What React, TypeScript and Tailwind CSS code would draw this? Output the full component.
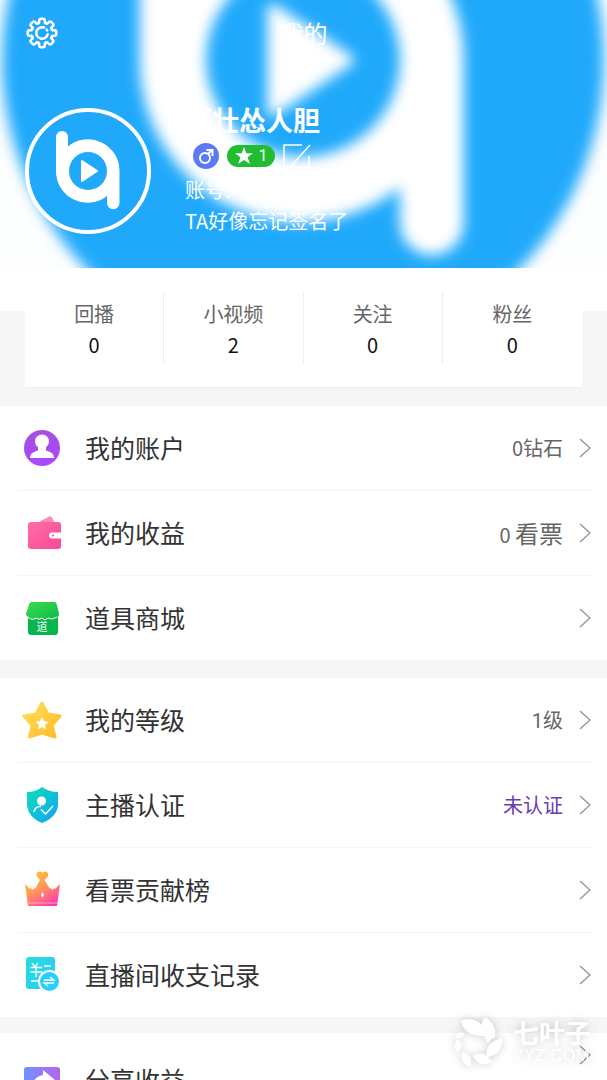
import type { ReactNode } from "react";

function LogoMark() {
  return (
    <g>
      <path
        fillRule="evenodd"
        fill="white"
        d="M-32 -34a6 6 0 0 1 12 0v9.500A31.500 31.500 0 0 1 31.500 0V32a6 6 0 0 1-12.500 0V25A31.500 31.500 0 0 1-32 0ZM0-19a19 19 0 1 0 0 38a19 19 0 1 0 0-38Z"
      />
      <path fill="white" stroke="white" strokeWidth="2" strokeLinejoin="round" d="M-6-10V10L9 0Z" />
    </g>
  );
}

const gearTurns = [0, 45, 90, 135, 180, 225, 270, 315];

function GearIcon() {
  return (
    <svg viewBox="-16 -16 32 32" className="size-8" fill="none" stroke="white" strokeWidth="2.500" strokeLinejoin="round" strokeLinecap="round">
      {gearTurns.map((turn) => (
        <path
          key={turn}
          transform={`rotate(${turn})`}
          d="M-5.200-9.300Q-3-9.600-2.800-11.500V-12.500Q-2.800-14.300-1-14.300H1Q2.800-14.300 2.800-12.500V-11.500Q3-9.600 5.200-9.300Q4.200-9.600 3.200-10.200"
        />
      ))}
      <path d="M2-5.500A5.800 5.800 0 1 0 5.700 1.200" />
      <path d="M4.700-3.400L5.200-2.500" />
    </svg>
  );
}

const icons: Record<string, ReactNode> = {
  account: (
    <>
      <linearGradient id="account" x2="0" y2="1"><stop stopColor="#a64fe0" /><stop offset="1" stopColor="#aa48ff" /></linearGradient>
      <circle cx="20" cy="20" r="18" fill="url(#account)" />
      <circle cx="20" cy="13.500" r="7" fill="white" />
      <path d="M8 30C8 25 12 24 16 22.500V18H24V22.500C28 24 32 25 32 30Z" fill="white" />
    </>
  ),
  income: (
    <>
      <linearGradient id="income" x2="1" y2="1"><stop stopColor="#ff6fa4" /><stop offset="1" stopColor="#f9479c" /></linearGradient>
      <path d="M15 10L27 3.500Q29 2.500 30 4.500L33 10Z" fill="#fb8cb4" />
      <rect x="6" y="9" width="33" height="27" rx="3" fill="url(#income)" />
      <path d="M39 19.500H30a3 3 0 0 0 0 6H39Z" fill="white" />
      <circle cx="31" cy="22.500" r="1" fill="#f9479c" />
    </>
  ),
  shop: (
    <>
      <linearGradient id="shop" x2="1" y2="1"><stop stopColor="#39dd4b" /><stop offset="1" stopColor="#0fb94d" /></linearGradient>
      <path d="M6 19H36V34a3 3 0 0 1-3 3H9a3 3 0 0 1-3-3Z" fill="#08b64e" />
      <path d="M9.500 4H32.500Q34 4 34.500 5.500L37 15.500Q37 20 32 20.500Q29 22 26 20Q23 23 20 20Q17 22 14 20Q11 22 8 19.500Q4 18.500 4 15.500L7.500 5.500Q8 4 9.500 4Z" fill="url(#shop)" />
      <path d="M6 19Q10 23 14 20Q17 22.500 20 20Q23 23.500 26 20Q30 22.500 35 19" fill="none" stroke="white" strokeWidth="1" />
      <text x="20" y="33" textAnchor="middle" fontSize="11" fill="white">道</text>
    </>
  ),
  level: (
    <>
      <linearGradient id="level" x2="1" y2="1"><stop stopColor="#ffe05a" /><stop offset="1" stopColor="#ffba27" /></linearGradient>
      <path d="M20 3L26 14L38 16L30 25.500L33 37L20 33L7.500 37L10 25.500L2 16L14 14Z" fill="url(#level)" stroke="url(#level)" strokeWidth="3" strokeLinejoin="round" />
      <path d="M20 17L22 21L26.500 22L23 25L24 29.500L20 27L16 29.500L17 25L13.500 22L18 21Z" fill="white" />
    </>
  ),
  verify: (
    <>
      <linearGradient id="verify" x2="1" y2="1"><stop stopColor="#0fe0b4" /><stop offset="1" stopColor="#12a2f5" /></linearGradient>
      <path d="M20 2Q27 7 36 7V20Q35 32 20 38Q6 32 5 20V7Q14 7 20 2Z" fill="url(#verify)" />
      <circle cx="19.500" cy="16" r="4.500" fill="white" />
      <path d="M12 27Q13 21 19 21.500M19 24.500L23.500 29L31 21" fill="none" stroke="white" strokeWidth="1.500" />
    </>
  ),
  ranking: (
    <>
      <linearGradient id="ranking" x1="0.200" x2="0.800" y2="1"><stop stopColor="#ffc42b" /><stop offset=".45" stopColor="#ff9a58" /><stop offset="1" stopColor="#ff35b2" /></linearGradient>
      <path d="M3 14L8 19Q10 12 13 19L18 10L15 6.500Q13 2 18 1.500Q20 1.500 20.500 3Q21 1.500 23.500 1.500Q28 3 25.500 7L22.500 10L28 19Q30 12 33 19L38 14L35 36H6Z" fill="url(#ranking)" />
      <path d="M6 33H35.500" stroke="white" strokeWidth="0.700" opacity="0.600" />
      <path d="M20.500 22L22 25L20.500 28L19 25ZM10.500 15L12.500 17.500L10.500 20L8.500 17.500ZM30.500 15L32.500 17.500L30.500 20L28.500 17.500Z" fill="white" />
    </>
  ),
  record: (
    <>
      <linearGradient id="record" x2="1" y2="1"><stop stopColor="#24dcdc" /><stop offset="1" stopColor="#31caff" /></linearGradient>
      <rect x="4" y="2" width="29" height="32" rx="3" fill="url(#record)" />
      <path d="M10 8L13 12L16 8M8.500 12.500H20M8.500 17H20M14 12V22M22 11H29M22 17H28M9 26H16" fill="none" stroke="white" strokeWidth="1.300" />
      <circle cx="27.500" cy="26.500" r="10.500" fill="#27cffb" stroke="white" strokeWidth="2" />
      <path d="M22 25H32L28 22M32 28H22L26 31" fill="none" stroke="white" strokeWidth="1.300" />
    </>
  ),
  share: (
    <>
      <linearGradient id="share" x2="1" y2="0"><stop stopColor="#6f92ff" /><stop offset="1" stopColor="#b566ed" /></linearGradient>
      <rect x="2" y="2" width="36" height="36" rx="3" fill="url(#share)" />
      <path d="M21 5L33 15L21 25V20Q13 20 9 28Q9 12 21 10Z" fill="white" />
    </>
  ),
};

function Chevron() {
  return (
    <svg viewBox="0 0 12 20" className="h-5 w-3 shrink-0" fill="none" stroke="#999" strokeWidth="1.500">
      <path d="M1 1L11 10L1 19" />
    </svg>
  );
}

type RowProps = { icon: string; label: string; children?: ReactNode };

function Row({ icon, label, children }: RowProps) {
  return (
    <li className="mr-[13px] ml-[18px] border-b border-gray-100 last:border-0">
      <a href="#" className="flex h-[84px] items-center pr-[3px] pl-1 text-[#333]">
        <svg viewBox="0 0 40 40" className="size-10 shrink-0">{icons[icon]}</svg>
        <span className="ml-[23px] flex-1 text-[25px]">{label}</span>
        <span className="mr-4 text-xl text-[#666]">{children}</span>
        <Chevron />
      </a>
    </li>
  );
}

const stats = [
  { label: "回播", value: 0 },
  { label: "小视频", value: 2 },
  { label: "关注", value: 0 },
  { label: "粉丝", value: 0 },
];

function Watermark() {
  return (
    <div className="absolute right-4 bottom-3 flex items-center gap-2 text-white drop-shadow-[0_0_4px_rgba(0,0,0,0.2)]">
      <svg viewBox="0 0 52 52" className="size-[52px]" fill="white">
        <path d="M8 5Q18 0 28 8L31 20Q12 21 8 5Z" />
        <path d="M32 1Q44 9 42 21Q37 23 35 28Q31 20 28 13Q28 6 32 1Z" />
        <path d="M49 22Q50 39 34 41Q31 27 49 22Z" />
        <path d="M39 46Q28 53 20 40Q31 33 39 46Z" />
        <path d="M18 51Q6 48 9 36Q20 38 18 51Z" />
        <path d="M5 36Q-2 30 5 23Q12 30 5 36Z" />
        <path d="M2 22Q4 15 11 17Q8 24 2 22Z" />
      </svg>
      <div className="text-center">
        <p className="text-[26px] leading-7 font-bold">七叶子</p>
        <p className="font-['Liberation_Sans',sans-serif] text-[17px] leading-5">7YZ.COM</p>
      </div>
    </div>
  );
}

export default function App() {
  return (
    <div className="relative h-screen overflow-hidden bg-[#f6f6f6] font-['Noto_Sans_CJK_SC',sans-serif]">
      <header className="relative h-[268px] overflow-hidden bg-[#fdfefe] text-white">
        {/* Blown-up avatar behind the profile */}
        <svg viewBox="0 0 607 268" preserveAspectRatio="xMidYMin slice" className="absolute inset-0 size-full">
          <g transform="translate(303 60) scale(5.1)">
            <g className="blur-[1.4px]">
              <circle r="59" fill="#20a9fb" />
              <LogoMark />
            </g>
          </g>
        </svg>
        <div className="relative">
          <div className="grid h-[66px] grid-cols-[1fr_auto_1fr] items-center px-[26px]">
            <button aria-label="设置" className="w-8">
              <GearIcon />
            </button>
            <h1 className="text-2xl">我的</h1>
          </div>
          <div className="flex gap-[34px] pt-9 pl-[25px]">
            <svg viewBox="-63 -63 126 126" className="mt-1.5 size-[126px] shrink-0">
              <circle r="61" fill="#20a9fb" stroke="white" strokeWidth="4" />
              <LogoMark />
            </svg>
            <div>
              <h2 className="text-[27px] leading-9 font-bold">酒壮怂人胆</h2>
              <div className="flex h-9 items-center gap-2 pl-2">
                <svg viewBox="0 0 26 26" className="size-[26px]" fill="none" stroke="white" strokeWidth="2">
                  <circle cx="13" cy="13" r="13" fill="#5b7bf5" stroke="none" />
                  <circle cx="12" cy="15" r="5" />
                  <path d="M15 11L19 7M13.500 7H19.500V13" />
                </svg>
                <span className="flex h-[22px] w-12 items-center justify-center gap-1.5 rounded-full bg-[#20bd30] font-[Roboto,sans-serif] text-base">
                  <svg viewBox="0 0 20 20" className="size-[18px]" fill="white">
                    <path d="M10 0L12.500 7H20L14 11.500L16.500 19L10 14.500L3.500 19L6 11.500L0 7H7.500Z" />
                  </svg>
                  1
                </span>
                <button aria-label="编辑资料">
                  <svg viewBox="0 0 28 26" className="h-[26px] w-7" fill="none" stroke="white" strokeWidth="1.500">
                    <path d="M19 2H1V24H26V13M27 2L8 23" />
                  </svg>
                </button>
              </div>
              <p className="text-xl leading-[31px]">账号:</p>
              <p className="text-xl leading-[31px]">TA好像忘记签名了</p>
            </div>
          </div>
        </div>
      </header>

      <section className="bg-linear-to-b from-white from-[43px] to-transparent to-[43px] px-[25px]">
        <ul className="grid h-[120px] grid-cols-4 border-b border-[#eee] bg-white pt-6 pb-6">
          {stats.map((stat) => (
            <li key={stat.label} className="border-r border-[#eee] text-center last:border-0">
              <a href="#" className="flex flex-col pt-1.5 text-xl leading-[31px]">
                <span className="text-[#666]">{stat.label}</span>
                <span className="text-[#111]">{stat.value}</span>
              </a>
            </li>
          ))}
        </ul>
      </section>

      <ul className="mt-[18px] bg-white">
        <Row icon="account" label="我的账户">0钻石</Row>
        <Row icon="income" label="我的收益">
          0 <span className="text-2xl">看票</span>
        </Row>
        <Row icon="shop" label="道具商城" />
      </ul>

      <ul className="mt-[18px] bg-white">
        <Row icon="level" label="我的等级">
          <span className="font-[Roboto,sans-serif]">1</span>级
        </Row>
        <Row icon="verify" label="主播认证">
          <span className="text-[#6b3aae]">未认证</span>
        </Row>
        <Row icon="ranking" label="看票贡献榜" />
        <Row icon="record" label="直播间收支记录" />
      </ul>

      <ul className="mt-4 bg-white">
        <li className="mr-[13px] ml-[18px]">
          <a href="#" className="flex h-24 items-start pt-3 pr-[3px] pl-1 text-[#333]">
            <svg viewBox="0 0 40 40" className="mt-5 size-10 shrink-0">{icons.share}</svg>
            <span className="mt-4 ml-[23px] flex-1 text-[25px]">分享收益</span>
            <Chevron />
          </a>
        </li>
      </ul>

      <Watermark />
    </div>
  );
}
